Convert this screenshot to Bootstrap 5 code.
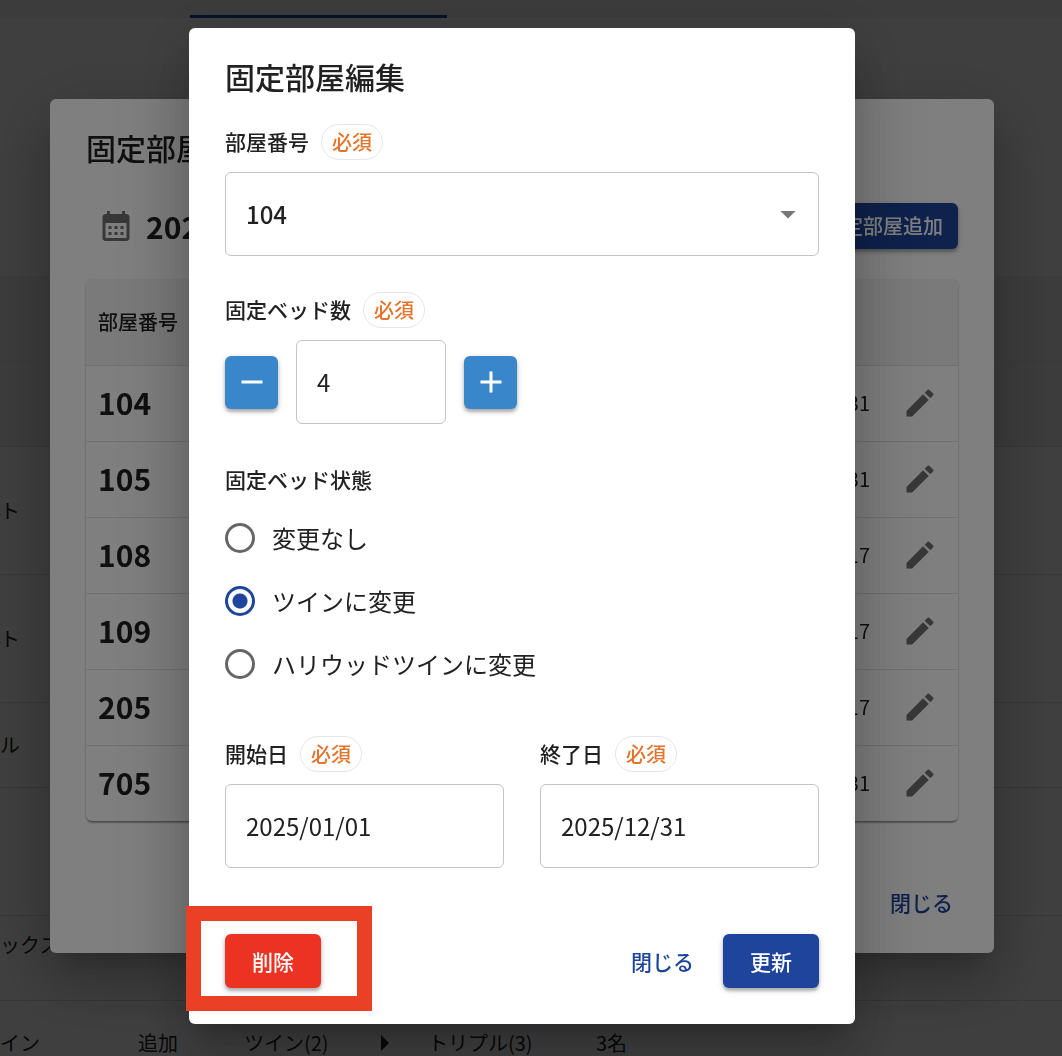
<!DOCTYPE html>
<html lang="ja">
<head>
<meta charset="utf-8">
<meta name="viewport" content="width=device-width, initial-scale=1">
<title>固定部屋編集</title>
<link href="https://cdn.jsdelivr.net/npm/bootstrap@5.3.0/dist/css/bootstrap.min.css" rel="stylesheet">
<style>
  :root { --ink: #212121; --brand: #1e449b; --step: #3a86cb; --danger: #eb3223; --note: #e2742c; }
  body { font-family: "Noto Sans CJK JP", "Noto Sans", sans-serif; color: var(--ink); height: 100vh; overflow: hidden; font-size: 20px; line-height: 30px; }
  svg { display: block; fill: currentColor; }

  /* page behind the dialogs */
  .tabs-bar { height: 18px; background: #f2f2f2; padding-left: 190px; }
  .tab-line { width: 257px; height: 3px; background: var(--brand); }
  .filter-space { height: 258px; }
  .plan-head { height: 86px; background: #f2f2f2; border-bottom: 1px solid #e6e6e6; }
  .plan-row { height: 128px; border-bottom: 1px solid #dcdcdc; }
  .plan-row.short { height: 85px; }
  .plan-row > span { flex: none; white-space: nowrap; }
  .c-type { width: 138px; } .c-act { width: 106px; } .c-from { width: 136px; } .c-arrow { width: 48px; } .c-to { width: 168px; }
  .two-line { padding-bottom: 26px; }

  /* dialogs */
  .modal { background: rgba(0,0,0,.5); padding: 0 18px 4px 0; overflow: hidden; }
  .modal-content { border: 0; border-radius: 6px; color: var(--ink); box-shadow: 0 17px 23px -11px rgba(0,0,0,.2), 0 36px 57px 5px rgba(0,0,0,.14), 0 14px 69px 12px rgba(0,0,0,.12); }
  .dlg-list { max-width: 944px; }
  .dlg-edit { max-width: 666px; }
  .dlg-title { font-size: 30px; line-height: 44px; font-weight: 500; margin: 0 0 26px; }
  .list-pad { padding: 26px 36px 24px; }
  .edit-pad { padding: 26px 36px 36px; }
  .list-bar { margin: 8px 0 31px; }
  .list-bar svg { margin: 0 12px; }
  .list-foot { margin: 54px -6px 0 0; }
  .big-num { font-size: 30px; line-height: 44px; font-weight: 700; }
  .icon-tone { color: #717171; }

  .act { height: 54px; border: 0; border-radius: 6px; font-size: 21px; line-height: 30px; font-weight: 500; }
  .act-solid { width: 96px; padding: 0; color: #fff; box-shadow: 0 3px 3px rgba(0,0,0,.2), 0 2px 6px rgba(0,0,0,.2); }
  .act-text { padding: 0 11px; color: var(--brand); }
  .act-add { height: 46px; padding: 0 15px; font-size: 20px; background: var(--brand); color: #fff; border-radius: 6px; border: 0; font-weight: 500; box-shadow: 0 3px 3px rgba(0,0,0,.2), 0 2px 6px rgba(0,0,0,.2); }
  .bg-brand { background: var(--brand); }
  .bg-del { background: var(--danger); }

  .room-box { border-radius: 6px; overflow: hidden; box-shadow: 0 3px 2px -2px rgba(0,0,0,.3), 0 2px 2px rgba(0,0,0,.2), 0 0 3px rgba(0,0,0,.16); }
  .room-table { margin: 0; color: var(--ink); }
  .room-table th, .room-table td { padding: 0 0 0 12px; vertical-align: middle; border-color: #e0e0e0; height: 76px; }
  .room-table tbody th { padding-bottom: 2px; }
  .room-table thead th { height: 85px; background: #f5f5f5; font-weight: 500; font-size: 20px; }
  .room-table tbody tr:last-child > * { border-bottom: 0; }
  .room-table .cell-edit { width: 88px; padding: 0 20px 0 32px; }
  .edit-btn { display: block; border: 0; background: none; padding: 0; }

  .lab { font-size: 21px; line-height: 30px; font-weight: 500; }
  .lab-row { height: 36px; margin-bottom: 12px; gap: 12px; }
  .lab-row .lab { padding-bottom: 2px; }
  .must { border: 1px solid #e6e6e6; border-radius: 18px; height: 36px; padding: 0 10px; line-height: 34px; color: var(--note); font-size: 20px; font-weight: 500; }
  .box { height: 84px; border: 1px solid #c4c4c4; border-radius: 6px; padding: 0 20px 2px; font-size: 24px; color: var(--ink); background-image: none; }
  .box-select { font-weight: 500; padding-bottom: 0; }
  .caret { right: 13px; top: 24px; color: #757575; pointer-events: none; }
  .block-gap { margin-bottom: 36px; }
  .step-btn { width: 53px; height: 53px; padding: 0; border: 0; border-radius: 6px; background: var(--step); color: #fff; box-shadow: 0 3px 3px rgba(0,0,0,.2), 0 2px 6px rgba(0,0,0,.2); }
  .qty { width: 150px; }
  .state-set { margin-bottom: 41px; }
  .state-set legend { line-height: 38px; margin-bottom: 8px; }
  .opt { height: 63px; gap: 17px; font-size: 24px; line-height: 36px; }
  .opt .form-check-input { width: 30px; height: 30px; margin: 0; border: 3px solid #666; flex: none; }
  .opt .form-check-input:checked { border-color: var(--brand); background: radial-gradient(circle, var(--brand) 7px, #fff 8px); }
  .gap-36 { gap: 36px; }
  .gap-18 { gap: 18px; }
  .foot { margin-top: 66px; }
  .callout { border: 15px solid #ea4026; top: -28px; right: -51px; bottom: -23px; left: -39px; pointer-events: none; }
</style>
<script src="https://cdn.jsdelivr.net/npm/bootstrap@5.3.0/dist/js/bootstrap.bundle.min.js"></script>
</head>
<body>
<svg class="d-none" aria-hidden="true">
  <symbol id="i-pen" viewBox="0 0 24 24"><path d="M3 17.25V21h3.75L17.81 9.94l-3.75-3.75L3 17.25zM20.71 7.04c.39-.39.39-1.02 0-1.41l-2.34-2.34a.9959.9959 0 0 0-1.41 0l-1.83 1.83 3.75 3.75 1.83-1.83z"/></symbol>
</svg>

<main>
  <div class="tabs-bar d-flex align-items-end"><div class="tab-line"></div></div>
  <div class="filter-space"></div>
  <div class="plan-head"></div>
  <div class="plan-head plan-row short"></div>
  <div class="plan-row d-flex align-items-center"><span class="c-type">ト</span></div>
  <div class="plan-row d-flex align-items-center"><span class="c-type">ト</span></div>
  <div class="plan-row short d-flex align-items-center"><span class="c-type">ル</span></div>
  <div class="plan-row"></div>
  <div class="plan-row short two-line d-flex align-items-center"><span class="c-type">ックス</span></div>
  <div class="plan-row short d-flex align-items-center">
    <span class="c-type">イン</span><span class="c-act">追加</span><span class="c-from">ツイン(2)</span>
    <span class="c-arrow"><svg width="9" height="16" viewBox="0 0 9 16"><path d="M1 0l8 8-8 8z"/></svg></span>
    <span class="c-to">トリプル(3)</span><span>3名</span>
  </div>
</main>

<div class="modal d-block" role="dialog" aria-labelledby="listTitle">
  <div class="modal-dialog modal-dialog-centered dlg-list">
    <div class="modal-content list-pad">
      <h2 class="dlg-title" id="listTitle">固定部屋</h2>
      <div class="d-flex align-items-center list-bar">
        <svg class="icon-tone" width="36" height="36" viewBox="0 0 24 24"><path d="M19 4h-1V2h-2v2H8V2H6v2H5c-1.11 0-1.99.9-1.99 2L3 20c0 1.1.89 2 2 2h14c1.1 0 2-.9 2-2V6c0-1.1-.9-2-2-2zm0 16H5V10h14v10zM9 14H7v-2h2v2zm4 0h-2v-2h2v2zm4 0h-2v-2h2v2zm-8 4H7v-2h2v2zm4 0h-2v-2h2v2zm4 0h-2v-2h2v2z"/></svg>
        <span class="big-num">2025</span>
        <button type="button" class="act-add ms-auto">固定部屋追加</button>
      </div>
      <div class="room-box">
        <table class="table room-table">
          <thead><tr><th>部屋番号</th><th></th><th></th></tr></thead>
          <tbody>
            <tr><th class="big-num">104</th><td class="text-end">12/31</td><td class="cell-edit"><button type="button" class="edit-btn icon-tone" aria-label="編集"><svg width="36" height="36"><use href="#i-pen"/></svg></button></td></tr>
            <tr><th class="big-num">105</th><td class="text-end">12/31</td><td class="cell-edit"><button type="button" class="edit-btn icon-tone" aria-label="編集"><svg width="36" height="36"><use href="#i-pen"/></svg></button></td></tr>
            <tr><th class="big-num">108</th><td class="text-end">17</td><td class="cell-edit"><button type="button" class="edit-btn icon-tone" aria-label="編集"><svg width="36" height="36"><use href="#i-pen"/></svg></button></td></tr>
            <tr><th class="big-num">109</th><td class="text-end">17</td><td class="cell-edit"><button type="button" class="edit-btn icon-tone" aria-label="編集"><svg width="36" height="36"><use href="#i-pen"/></svg></button></td></tr>
            <tr><th class="big-num">205</th><td class="text-end">17</td><td class="cell-edit"><button type="button" class="edit-btn icon-tone" aria-label="編集"><svg width="36" height="36"><use href="#i-pen"/></svg></button></td></tr>
            <tr><th class="big-num">705</th><td class="text-end">12/31</td><td class="cell-edit"><button type="button" class="edit-btn icon-tone" aria-label="編集"><svg width="36" height="36"><use href="#i-pen"/></svg></button></td></tr>
          </tbody>
        </table>
      </div>
      <div class="d-flex justify-content-end list-foot">
        <button type="button" class="btn act act-text">閉じる</button>
      </div>
    </div>
  </div>
</div>

<div class="modal d-block" role="dialog" aria-labelledby="editTitle">
  <div class="modal-dialog modal-dialog-centered dlg-edit">
    <form class="modal-content edit-pad">
      <h2 class="dlg-title" id="editTitle">固定部屋編集</h2>

      <div class="d-flex align-items-center lab-row"><label class="lab" for="room">部屋番号</label><span class="must">必須</span></div>
      <div class="position-relative block-gap">
        <select class="form-select box box-select" id="room"><option>104</option></select>
        <svg class="caret position-absolute" width="36" height="36" viewBox="0 0 24 24"><path d="M7 10l5 5 5-5z"/></svg>
      </div>

      <div class="d-flex align-items-center lab-row"><label class="lab" for="beds">固定ベッド数</label><span class="must">必須</span></div>
      <div class="d-flex align-items-center gap-18 block-gap">
        <button type="button" class="step-btn d-flex align-items-center justify-content-center" aria-label="減らす"><svg width="36" height="36" viewBox="0 0 24 24"><path d="M19 13H5v-2h14v2z"/></svg></button>
        <input type="text" class="form-control box qty" id="beds" value="4">
        <button type="button" class="step-btn d-flex align-items-center justify-content-center" aria-label="増やす"><svg width="36" height="36" viewBox="0 0 24 24"><path d="M19 13h-6v6h-2v-6H5v-2h6V5h2v6h6v2z"/></svg></button>
      </div>

      <fieldset class="state-set">
        <legend class="lab">固定ベッド状態</legend>
        <div class="d-flex align-items-center opt"><input class="form-check-input" type="radio" name="state" id="s1"><label for="s1">変更なし</label></div>
        <div class="d-flex align-items-center opt"><input class="form-check-input" type="radio" name="state" id="s2" checked><label for="s2">ツインに変更</label></div>
        <div class="d-flex align-items-center opt"><input class="form-check-input" type="radio" name="state" id="s3"><label for="s3">ハリウッドツインに変更</label></div>
      </fieldset>

      <div class="d-flex gap-36">
        <div class="flex-fill">
          <div class="d-flex align-items-center lab-row"><label class="lab" for="from">開始日</label><span class="must">必須</span></div>
          <input type="text" class="form-control box" id="from" value="2025/01/01">
        </div>
        <div class="flex-fill">
          <div class="d-flex align-items-center lab-row"><label class="lab" for="to">終了日</label><span class="must">必須</span></div>
          <input type="text" class="form-control box" id="to" value="2025/12/31">
        </div>
      </div>

      <div class="d-flex foot">
        <div class="position-relative">
          <button type="button" class="btn act act-solid bg-del">削除</button>
          <div class="callout position-absolute"></div>
        </div>
        <div class="d-flex gap-18 ms-auto">
          <button type="button" class="btn act act-text">閉じる</button>
          <button type="submit" class="btn act act-solid bg-brand">更新</button>
        </div>
      </div>
    </form>
  </div>
</div>
</body>
</html>
